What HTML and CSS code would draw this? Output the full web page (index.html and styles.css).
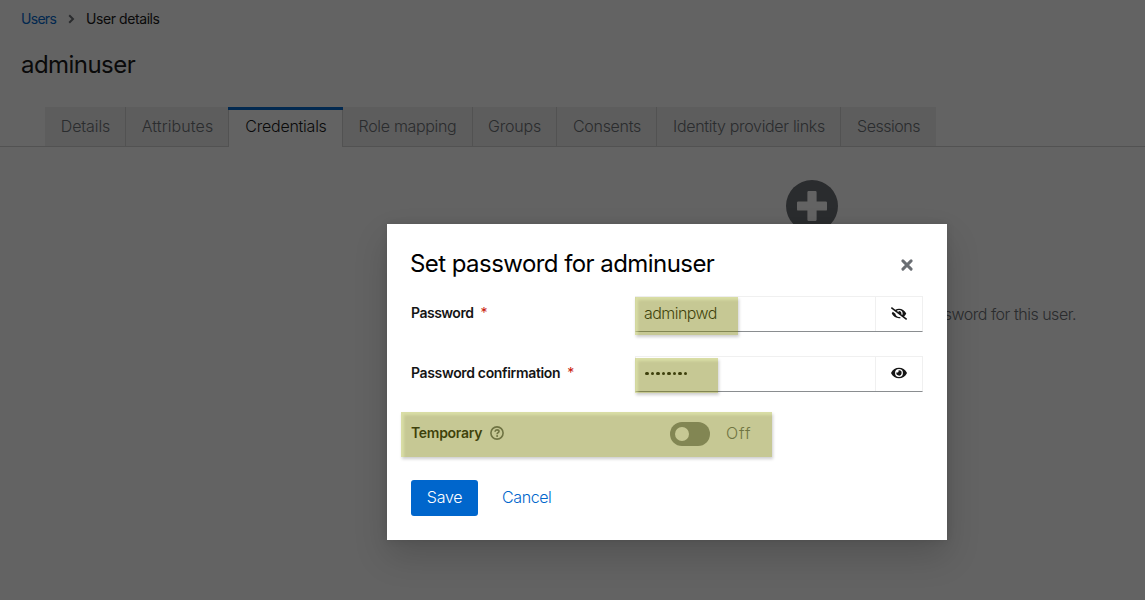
FILE: index.html
```html
<!DOCTYPE html>
<html lang="en">
<head>
<meta charset="utf-8">
<title>User details</title>
<link rel="stylesheet" href="styles.css">
</head>
<body>
<main class="page">
  <nav class="breadcrumb">
    <a class="crumb-link">Users</a>
    <svg class="crumb-arrow" width="7" height="10" viewBox="0 0 7 10"><path d="M1.2 1.2 5 5 1.2 8.8" fill="none" stroke="currentColor" stroke-width="2"/></svg>
    <span class="crumb-current">User details</span>
  </nav>
  <h1 class="page-title">adminuser</h1>
  <div class="tabs">
    <span class="tab tab-details">Details</span>
    <span class="tab tab-attributes">Attributes</span>
    <span class="tab tab-credentials active">Credentials</span>
    <span class="tab tab-roles">Role mapping</span>
    <span class="tab tab-groups">Groups</span>
    <span class="tab tab-consents">Consents</span>
    <span class="tab tab-idp">Identity provider links</span>
    <span class="tab tab-sessions">Sessions</span>
  </div>
  <section class="empty-state">
    <svg class="plus-icon" width="52" height="52" viewBox="0 0 52 52"><circle cx="26" cy="26" r="26" fill="#6a6e73"/><path d="M22.6 11h6.8q1.2 0 1.2 1.2v9.2h9.2q1.2 0 1.2 1.2v6.8q0 1.2-1.2 1.2h-9.2v9.2q0 1.2-1.2 1.2h-6.8q-1.2 0-1.2-1.2v-9.2h-9.2q-1.2 0-1.2-1.2v-6.8q0-1.2 1.2-1.2h9.2v-9.2q0-1.2 1.2-1.2z" fill="#fff"/></svg>
    <p class="empty-text">You can set a password for this user.</p>
  </section>
</main>
<div class="backdrop">
  <div class="modal">
    <header class="modal-header">
      <h2 class="modal-title">Set password for adminuser</h2>
      <svg class="close-icon" width="12" height="12" viewBox="0 0 12 12"><path d="M1.9 1.9l8.2 8.2M10.1 1.9l-8.2 8.2" stroke="#6a6e73" stroke-width="2.9" stroke-linecap="round"/></svg>
    </header>
    <div class="row">
      <div class="label"><span class="label-password">Password</span><span class="required">*</span></div>
      <div class="field">
        <div class="input">adminpwd</div>
        <div class="toggle"><svg width="16" height="13" viewBox="0 0 640 512"><path fill="#151515" d="M320 400c-75.85 0-137.25-58.71-142.9-133.11L72.2 185.82c-13.79 17.3-26.48 35.59-36.72 55.59a32.35 32.35 0 0 0 0 29.19C89.71 376.41 197.07 448 320 448c26.91 0 52.87-4 77.89-10.46L346 397.39a144.13 144.13 0 0 1-26 2.61zm313.82 58.1l-110.55-85.44a331.25 331.25 0 0 0 81.25-102.07 32.35 32.35 0 0 0 0-29.19C550.29 135.59 442.93 64 320 64a308.15 308.15 0 0 0-147.32 37.7L45.46 3.37A16 16 0 0 0 23 6.18L3.37 31.45A16 16 0 0 0 6.18 53.9l588.36 454.73a16 16 0 0 0 22.46-2.81l19.64-25.27a16 16 0 0 0-2.82-22.45zm-183.72-142l-39.3-30.38A94.75 94.75 0 0 0 416 256a94.76 94.76 0 0 0-121.31-92.21A47.65 47.65 0 0 1 304 192a46.64 46.64 0 0 1-1.54 10l-73.61-56.89A142.31 142.31 0 0 1 320 112a143.92 143.92 0 0 1 144 144c0 21.63-5.29 41.79-13.9 60.11z"/></svg></div>
        <div class="mark mark-password"></div>
      </div>
    </div>
    <div class="row">
      <div class="label"><span class="label-confirm">Password confirmation</span><span class="required">*</span></div>
      <div class="field">
        <div class="input"><span class="dots"><i></i><i></i><i></i><i></i><i></i><i></i><i></i><i></i></span></div>
        <div class="toggle"><svg width="16" height="14" viewBox="0 0 576 512"><path fill="#151515" d="M572.52 241.4C518.29 135.59 410.93 64 288 64S57.68 135.64 3.48 241.41a32.35 32.35 0 0 0 0 29.19C57.71 376.41 165.07 448 288 448s230.32-71.64 284.52-177.41a32.35 32.35 0 0 0 0-29.19zM288 400a144 144 0 1 1 144-144 143.93 143.93 0 0 1-144 144zm0-240a95.31 95.31 0 0 0-25.31 3.79 47.85 47.85 0 0 1-66.9 66.9A95.78 95.78 0 1 0 288 160z"/></svg></div>
        <div class="mark mark-confirm"></div>
      </div>
    </div>
    <div class="row row-temporary">
      <div class="label"><span class="label-temporary">Temporary</span>
        <svg class="help-icon" width="14" height="14" viewBox="0 0 14 14" fill="none" stroke="#6a6e73"><circle cx="7" cy="7" r="6.1" stroke-width="1.6"/><path d="M5 5.7C5.1 4.5 5.9 3.9 7 3.9c1.1 0 2 .6 2 1.6C9 6.7 7.1 6.7 7.1 8.2" stroke-width="1.6"/><circle cx="7.1" cy="10" r="1" fill="#6a6e73" stroke="none"/></svg>
      </div>
      <div class="switch-group"><span class="switch"><span class="knob"></span></span><span class="switch-text">Off</span></div>
      <div class="mark mark-temporary"></div>
    </div>
    <footer class="actions"><button class="save">Save</button><a class="cancel">Cancel</a></footer>
  </div>
</div>
</body>
</html>
```
FILE: styles.css
```css
* { box-sizing: border-box; }
body { margin: 0; width: 1145px; height: 600px; overflow: hidden; background: #fff; color: #151515; font: 16px/24px Inter, sans-serif; font-weight: 300; }
h1, h2, p { margin: 0; font-weight: 400; }
.page { display: flex; flex-direction: column; height: 600px; }
.breadcrumb { display: flex; align-items: center; height: 21px; margin: 8px 0 0 21px; font-size: 14px; font-weight: 400; }
.crumb-link { width: 35px; color: #06c; letter-spacing: -.7px; }
.crumb-arrow { margin: 1px 11px 0 12px; color: #6a6e73; }
.crumb-current { letter-spacing: -.42px; }
.page-title { margin: 20px 0 0 21px; font-size: 24px; line-height: 32px; letter-spacing: -.55px; }
.tabs { display: flex; height: 40px; margin-top: 26px; padding-left: 45px; border-bottom: 1px solid #d2d2d2; }
.tab { display: flex; align-items: center; justify-content: center; height: 39px; padding-bottom: 1px; background: #f0f0f0; border-right: 1px solid #d2d2d2; color: #6a6e73; white-space: nowrap; }
.tab-details { width: 81px; padding-left: 1px; letter-spacing: -.1px; }
.tab-attributes { width: 103px; padding-left: 1px; letter-spacing: .1px; }
.tab-credentials { width: 114px; letter-spacing: -.25px; }
.tab-roles { width: 130px; letter-spacing: -.32px; }
.tab-groups { width: 84px; letter-spacing: -.2px; }
.tab-consents { width: 100px; padding-left: 1px; letter-spacing: -.28px; }
.tab-idp { width: 184px; padding-left: 1px; letter-spacing: -.32px; }
.tab-sessions { width: 95px; border-right: 0; letter-spacing: -.5px; }
.tab.active { position: relative; height: 40px; padding: 0 0 2px 1px; background: #fff; color: #151515; }
.tab.active::before { content: ""; position: absolute; top: 0; left: -1px; right: -1px; height: 3px; background: #06c; }
.empty-state { display: flex; flex-direction: column; align-items: center; width: 528px; margin: 33px 0 0 548px; }
.empty-text { align-self: flex-end; margin-top: 70px; color: #6a6e73; font-weight: 300; letter-spacing: -.12px; white-space: nowrap; }
.backdrop { position: absolute; inset: 0; display: flex; padding: 224px 0 0 387px; background: rgba(3,3,3,.62); }
.modal { width: 560px; height: 316px; padding: 24px; background: #fff; box-shadow: 0 16px 32px rgba(3,3,3,.16), 0 0 8px rgba(3,3,3,.1); }
.modal-header { display: flex; align-items: center; justify-content: space-between; height: 32px; }
.modal-title { margin-left: -1px; color: #000; font-size: 24px; line-height: 32px; letter-spacing: -.56px; }
.close-icon { margin: 2px 10px 0 0; }
.row { display: flex; height: 36px; margin-top: 24px; }
.modal-header + .row { margin-top: 16px; }
.label { display: flex; align-items: center; width: 224px; height: 34px; font-size: 14px; font-weight: 600; }
.label-password { letter-spacing: -.5px; }
.label-confirm { letter-spacing: -.34px; }
.label-temporary { letter-spacing: -.3px; }
.required { margin-left: 7px; color: #c9190b; font-weight: 400; }
.field { position: relative; display: flex; width: 288px; height: 36px; border: 1px solid #f0f0f0; border-bottom-color: #8a8d90; }
.input { display: flex; align-items: center; width: 240px; padding: 0 0 2px 8px; border-right: 1px solid #f0f0f0; letter-spacing: -.55px; }
.toggle { display: flex; align-items: center; justify-content: center; flex: 1; padding-bottom: 2px; }
.dots { display: flex; gap: 2px; padding: 1px 0 0 1px; }
.dots i { width: 3.5px; height: 3.5px; border-radius: 50%; background: #151515; }
.mark { position: absolute; background: rgba(119,124,0,.42); box-shadow: inset 3px 3px 3px rgba(245,252,190,.42), 1px 2px 3px rgba(0,0,0,.2); }
.mark-password { left: -1px; top: 0; width: 103px; height: 38px; }
.mark-confirm { left: -1px; top: 1px; width: 83px; height: 35px; }
.row-temporary { position: relative; }
.mark-temporary { left: -10px; top: -4px; width: 371px; height: 45px; }
.help-icon { margin-left: 8px; }
.switch-group { display: flex; align-items: center; padding: 0 0 1px 35px; color: #6a6e73; }
.switch { display: flex; align-items: center; width: 40px; height: 24px; margin-top: 1px; padding-left: 5px; border-radius: 12px; background: #8a8d90; }
.knob { width: 14px; height: 14px; border-radius: 50%; background: #fff; }
.switch-text { margin: -1px 0 0 16px; letter-spacing: .9px; }
.actions { display: flex; align-items: center; height: 36px; margin-top: 28px; }
.save { width: 67px; height: 36px; padding: 0 0 2px; border: 0; border-radius: 3px; background: #06c; color: #fff; font: inherit; letter-spacing: -.3px; }
.cancel { margin: -2px 0 0 24px; color: #06c; letter-spacing: -.4px; }
.empty-text { letter-spacing: -.48px; }
```
